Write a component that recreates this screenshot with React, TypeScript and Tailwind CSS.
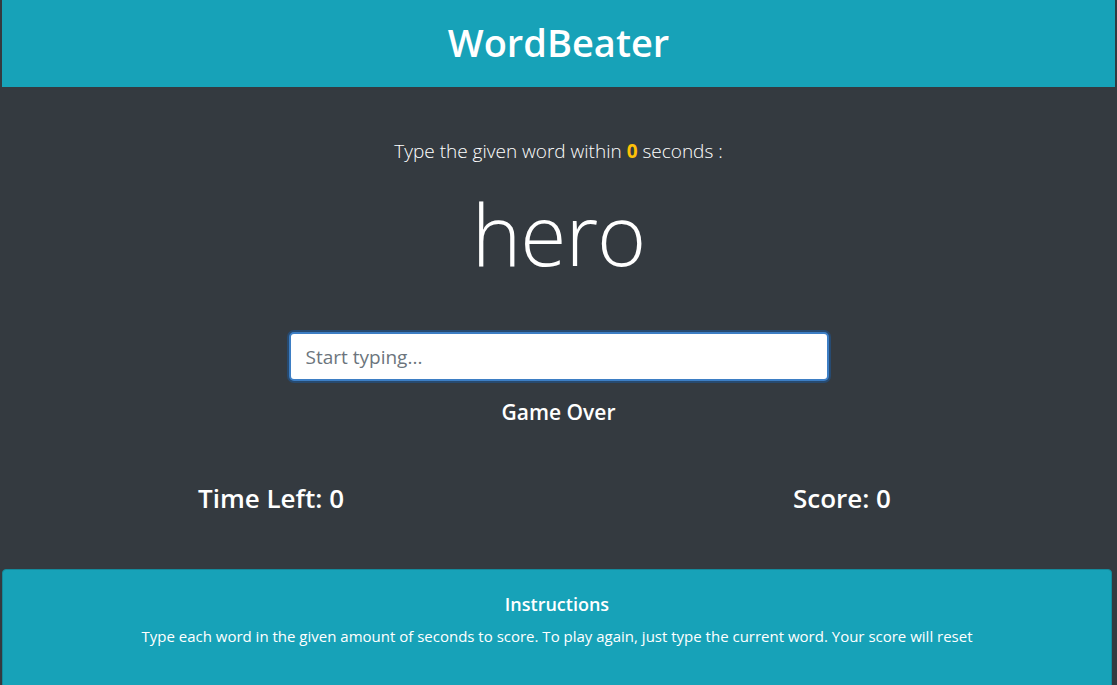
import React from "react";

export default function App() {
    return (
        <div className="min-h-[685px] bg-[#343a40] text-white font-['Open_Sans','Noto_Sans',sans-serif] overflow-hidden">
            <header className="mx-[2px] h-[87px] bg-[#17a2b8] flex items-center justify-center">
                <h1 className="text-[38px] font-semibold leading-none pb-[4px]">WordBeater</h1>
            </header>

            <main className="flex flex-col items-center">
                <p className="mt-[51px] text-[19px] font-light leading-[26px]">
                    Type the given word within <span className="font-bold text-[#ffc107]">0</span> seconds :
                </p>
                <h2 className="mt-[20px] text-[84px] font-light leading-[100px] tracking-[-1px]">hero</h2>
                <input
                    type="text"
                    placeholder="Start typing..."
                    className="mt-[48px] w-[540px] h-[49px] rounded-[5px] bg-white border-[2px] border-[#3d7ec4] px-[15px] text-[19px] text-[#495057] placeholder:text-[#6c757d] outline-none shadow-[0_0_0_2px_rgba(0,123,255,0.25)]"
                />
                <h4 className="mt-[18px] text-[21px] font-semibold leading-[26px]">Game Over</h4>
            </main>

            <div className="mt-[56px] flex justify-between pl-[198px] pr-[226px]">
                <h3 className="text-[26px] font-semibold leading-[34px]">Time Left: 0</h3>
                <h3 className="text-[26px] font-semibold leading-[34px]">Score: 0</h3>
            </div>

            <section className="mt-[54px] ml-[2px] mr-[5px] h-[130px] rounded-[4px] bg-[#17a2b8] border border-[#138a9c] flex flex-col items-center pt-[22px]">
                <h5 className="text-[18px] font-semibold leading-[24px]">Instructions</h5>
                <p className="mt-[10px] text-[15px] leading-[20px]">
                    Type each word in the given amount of seconds to score. To play again, just type the current word. Your score will reset
                </p>
            </section>
        </div>
    );
}
